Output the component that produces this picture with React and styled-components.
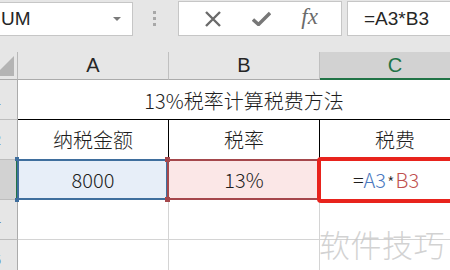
import React from 'react';
import styled, { createGlobalStyle, css } from 'styled-components';

const GlobalStyle = createGlobalStyle`
  html, body {
    margin: 0;
    padding: 0;
    width: 450px;
    height: 270px;
    overflow: hidden;
    background: #e6e6e6;
  }
`;

const colors = {
  chrome: '#e6e6e6',
  chromeSel: '#d2d2d2',
  chromeLine: '#c6c6c6',
  grid: '#d4d4d4',
  green: '#217346',
  blue: '#3f6e9d',
  blueFill: '#e7eef8',
  rose: '#a5474c',
  roseFill: '#fbe7e7',
  red: '#e8231d',
};

const Page = styled.div`
  position: relative;
  width: 450px;
  height: 270px;
  overflow: hidden;
  background: ${colors.chrome};
`;

// formula bar
const FormulaBar = styled.div`
  display: flex;
  align-items: flex-start;
  height: 36px;
  padding-top: 1px;
  box-sizing: border-box;
`;

const Field = styled.div`
  box-sizing: border-box;
  height: 35px;
  background: #fff;
  border: 1px solid ${colors.chromeLine};
  display: flex;
  align-items: center;
  font-family: 'Liberation Sans', Arial, sans-serif;
  font-size: 19px;
  color: #262626;
`;

const NameBox = styled(Field)`
  width: 134px;
  margin-left: -1px;
  margin-top: 1px;
  height: 34px;
  padding-left: 1px;
  justify-content: space-between;
  padding-right: 11px;
`;

const Caret = styled.span`
  width: 0;
  height: 0;
  border-left: 4px solid transparent;
  border-right: 4px solid transparent;
  border-top: 4px solid #7a7a7a;
`;

const Grip = styled.div`
  width: 45px;
  height: 35px;
  display: flex;
  flex-direction: column;
  align-items: center;
  justify-content: center;
  gap: 3px;
  padding-right: 2px;
  box-sizing: border-box;

  span {
    width: 3px;
    height: 3px;
    background: #a8a8a8;
  }
`;

const FxBox = styled(Field)`
  width: 164px;
  justify-content: space-around;
  padding: 0 8px 0 10px;
`;

const FxLabel = styled.span`
  font-family: 'Liberation Serif', 'Times New Roman', serif;
  font-style: italic;
  font-size: 23px;
  color: #6b6b6b;
  margin-top: -3px;
`;

const FormulaInput = styled(Field)`
  flex: 1;
  margin-left: 5px;
  margin-right: -2px;
  padding-left: 16px;
`;

// sheet
const Sheet = styled.div`
  margin-top: 16px;
  display: grid;
  grid-template-columns: 18px repeat(4, 151px);
  grid-template-rows: 28px repeat(5, 40px);
  width: 622px;
`;

const Corner = styled.div`
  background: ${colors.chrome};
  border-right: 1px solid #b8b8b8;
  border-bottom: 1px solid #ababab;
  display: flex;
  justify-content: flex-end;
  align-items: flex-end;
  padding: 0 3px 3px 0;
  overflow: hidden;

  &::before {
    content: '';
    flex: none;
    width: 0;
    height: 0;
    border-left: 20px solid transparent;
    border-bottom: 20px solid #b4b4b4;
  }
`;

const ColHead = styled.div`
  background: ${({ $active }) => ($active ? colors.chromeSel : colors.chrome)};
  border-right: 1px solid #c0c0c0;
  border-bottom: ${({ $active }) =>
    $active ? `2px solid ${colors.green}` : '1px solid #ababab'};
  display: flex;
  align-items: center;
  justify-content: center;
  padding-top: ${({ $active }) => ($active ? '1px' : '0')};
  font-family: 'Liberation Sans', Arial, sans-serif;
  font-size: 20px;
  color: ${({ $active }) => ($active ? colors.green : '#262626')};
`;

const RowHead = styled.div`
  background: ${({ $active }) => ($active ? colors.chromeSel : colors.chrome)};
  border-right: ${({ $active }) =>
    $active ? `2px solid ${colors.green}` : '1px solid #ababab'};
  border-bottom: 1px solid #bdbdbd;
  display: flex;
  align-items: center;
  justify-content: flex-end;
  padding-right: 16px;
  overflow: hidden;
  font-family: 'Liberation Sans', Arial, sans-serif;
  font-size: 15px;
  color: #5f7f9f;
`;

const Cell = styled.div`
  position: relative;
  display: flex;
  align-items: center;
  justify-content: center;
  background: ${({ $fill }) => $fill || '#fff'};
  border-right: 1px solid ${({ $line }) => $line || colors.grid};
  border-bottom: 1px solid ${({ $line }) => $line || colors.grid};
  font-family: 'Noto Sans CJK SC', 'Noto Sans', sans-serif;
  font-weight: 300;
  font-size: 20px;
  color: #1e1e1e;
`;

const TitleCell = styled(Cell)`
  grid-column: 2 / span 3;
  border-right-color: #fff;
  border-bottom-color: #000;
  padding-top: 1px;
`;

const HeadCell = styled(Cell)`
  border-right-color: #000;
  border-bottom-color: #000;
`;

const Handle = styled.span`
  position: absolute;
  width: ${({ $size }) => $size}px;
  height: ${({ $size }) => $size}px;
  background: ${({ $color }) => $color};
  z-index: 3;
  ${({ $pos }) => $pos}
`;

const Selection = styled.span`
  position: absolute;
  top: -1px;
  bottom: -1px;
  left: ${({ $left }) => $left}px;
  right: 0;
  border: 2px solid ${({ $color }) => $color};
  z-index: ${({ $z }) => $z};
  pointer-events: none;
`;

const Highlight = styled.span`
  position: absolute;
  left: -3px;
  top: -3px;
  bottom: -4px;
  right: 0;
  border: 4px solid ${colors.red};
  border-radius: 4px;
  z-index: 4;
`;

const Ref = styled.span`
  color: ${({ $c }) => $c};
`;

const Star = styled.span`
  font-size: 17px;
  vertical-align: -1px;
  margin: 0 1px;
`;

const FormulaText = styled.span`
  padding-right: 18px;
`;

const Watermark = styled.div`
  position: absolute;
  left: 319px;
  top: 221px;
  font-family: 'Noto Sans CJK SC', sans-serif;
  font-weight: 300;
  font-size: 31px;
  color: rgba(196, 196, 196, 0.75);
  letter-spacing: 0.5px;
  z-index: 5;
  pointer-events: none;
`;

const CrossIcon = () => (
  <svg width="18" height="18" viewBox="0 0 18 18">
    <path d="M2 2 L16 16 M16 2 L2 16" stroke="#6b6b6b" strokeWidth="2.4" fill="none" />
  </svg>
);

const CheckIcon = () => (
  <svg width="19" height="15" viewBox="0 0 19 15">
    <path d="M1 8.5 L6.5 13.5 L18 2" stroke="#777" strokeWidth="3.4" fill="none" strokeLinejoin="round" />
  </svg>
);

const leftCorners = (o, x) => [
  css`top: ${o}px; left: ${x}px;`,
  css`bottom: ${o}px; left: ${x}px;`,
];

const App = () => (
  <Page>
    <GlobalStyle />
    <FormulaBar>
      <NameBox>
        <span>UM</span>
        <Caret />
      </NameBox>
      <Grip>
        <span />
        <span />
        <span />
      </Grip>
      <FxBox>
        <CrossIcon />
        <CheckIcon />
        <FxLabel>fx</FxLabel>
      </FxBox>
      <FormulaInput>=A3*B3</FormulaInput>
    </FormulaBar>

    <Sheet>
      <Corner />
      <ColHead>A</ColHead>
      <ColHead>B</ColHead>
      <ColHead $active>C</ColHead>
      <ColHead>D</ColHead>

      <RowHead>1</RowHead>
      <TitleCell>13%税率计算税费方法</TitleCell>
      <Cell />

      <RowHead>2</RowHead>
      <HeadCell>纳税金额</HeadCell>
      <HeadCell>税率</HeadCell>
      <HeadCell>税费</HeadCell>
      <Cell />

      <RowHead $active>3</RowHead>
      <Cell $fill={colors.blueFill}>
        <Selection $left={-1} $color={colors.blue} $z={1} />
        {leftCorners(-3, -3).map((p, i) => (
          <Handle key={i} $size={4} $color={colors.blue} $pos={p} />
        ))}
        8000
      </Cell>
      <Cell $fill={colors.roseFill}>
        <Selection $left={-2} $color={colors.rose} $z={2} />
        {leftCorners(-3, -4).map((p, i) => (
          <Handle key={i} $size={5} $color={colors.rose} $pos={p} />
        ))}
        13%
      </Cell>
      <Cell>
        <Highlight />
        <FormulaText>
          =<Ref $c="#4a78c0">A3</Ref><Star>*</Star><Ref $c="#c0504d">B3</Ref>
        </FormulaText>
      </Cell>
      <Cell />

      <RowHead>4</RowHead>
      <Cell />
      <Cell />
      <Cell />
      <Cell />

      <RowHead>5</RowHead>
      <Cell />
      <Cell />
      <Cell />
      <Cell />
    </Sheet>

    <Watermark>软件技巧</Watermark>
  </Page>
);

export default App;
